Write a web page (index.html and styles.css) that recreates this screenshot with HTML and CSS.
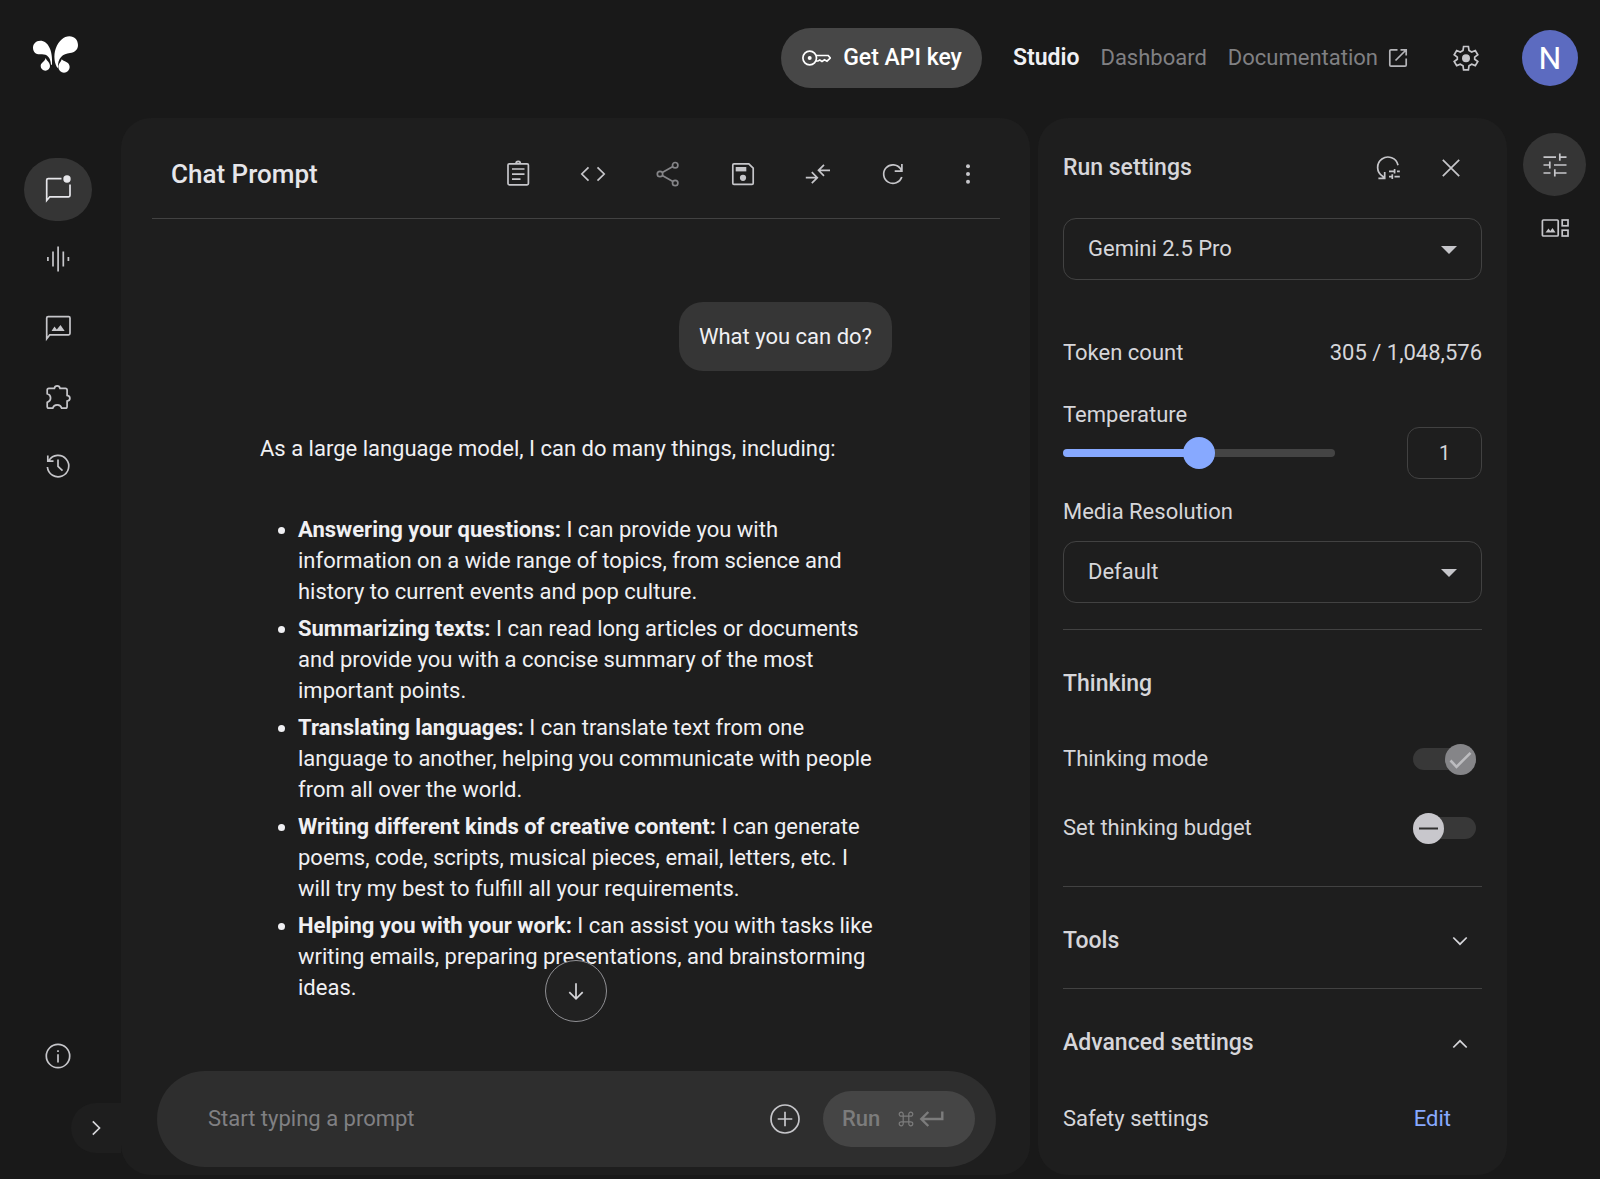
FILE: index.html
```html
<!DOCTYPE html>
<html lang="en">
<head>
<meta charset="utf-8">
<meta name="viewport" content="width=device-width, initial-scale=1">
<title>Chat Prompt</title>
<link rel="stylesheet" href="styles.css">
</head>
<body>
<div class="app">
  <header class="topbar">
    <a class="logo" href="#" aria-label="Home">
      <svg width="45" height="37" viewBox="100 107 135 111"><path d="M157 193C160 150 145 121 122 121C108 121 100 131 100 142C100 155 110 163 122 162C140 160 152 168 154 193ZM175 204C164 192 161 165 168 145C177 121 193 108 209 108C225 108 235 120 235 134C235 148 225 157 211 158C190 160 173 172 175 204ZM138 173C142 183 151 186 151 197A14 14 0 0 1 123 197C123 187 136 184 138 173ZM186 177C191 184 210 184 210 200A17 17 0 0 1 176 200C176 190 184 186 186 177Z" fill="#fff"/></svg>
    </a>
    <button class="api-key" type="button">
      <svg class="icon" viewBox="0 0 30 30"><circle cx="8.7" cy="15" r="6.8"/><circle class="solid" cx="8.7" cy="15" r="2"/><path d="M15 12.5H27.2L29.3 15L26 18.2L23.5 16.8L21 18.4L18.8 17L17 18H15"/></svg>
      Get API key
    </button>
    <nav class="links" aria-label="Main">
      <a class="link current" href="#">Studio</a>
      <a class="link" href="#">Dashboard</a>
      <a class="link" href="#">Documentation
        <svg class="icon small" viewBox="0 0 20 20"><path d="M9.5 1.8H3Q1.8 1.8 1.8 3V17Q1.8 18.2 3 18.2H17Q18.2 18.2 18.2 17V10.5M12.5 1.8H18.2V7.5M18 2L7.5 12.5"/></svg>
      </a>
    </nav>
    <button class="plain gear" type="button" aria-label="Settings">
      <svg class="icon" viewBox="0 0 30 30"><path d="M12.6 3.5H17.4L18 7.4L20.7 9L24.3 7.5L26.8 11.8L23.7 14.1V16.2L26.8 18.5L24.3 22.6L20.7 21.2L18 22.8L17.4 26.8H12.6L12 22.8L9.3 21.2L5.7 22.6L3.2 18.5L6.3 16.2V14.1L3.2 11.8L5.7 7.5L9.3 9L12 7.4Z"/><circle class="solid" cx="15" cy="15.2" r="4"/></svg>
    </button>
    <button class="avatar" type="button" aria-label="Account">N</button>
  </header>

  <nav class="rail" aria-label="Tools">
    <button class="rail-item active" type="button" aria-label="Chat">
      <svg class="icon" viewBox="0 0 30 30"><path d="M18.5 3.6H5.2Q3.7 3.6 3.7 5.1V25.5L6.8 21.8H25.6Q27 21.8 27 20.3V9.5"/><circle class="solid" cx="24" cy="4" r="3.7"/></svg>
    </button>
    <button class="rail-item" type="button" aria-label="Stream">
      <svg class="icon" viewBox="0 0 30 30"><path d="M4.9 13V17M10 7.5V22.5M15.1 2.5V27.5M20.3 7.5V22.5M25.4 13V17"/></svg>
    </button>
    <button class="rail-item" type="button" aria-label="Generate media">
      <svg class="icon" viewBox="0 0 30 30"><path d="M3.7 25.8V5.1Q3.7 3.6 5.2 3.6H25.6Q27 3.6 27 5.1V20.3Q27 21.8 25.6 21.8H6.8Z"/><path class="solid" d="M8.5 18L11.5 13.6L13.8 16.6L17.5 12L21.7 18Z"/></svg>
    </button>
    <button class="rail-item" type="button" aria-label="Build">
      <svg class="icon" viewBox="0 0 30 30"><path d="M4.2 8Q4.2 6.3 5.9 6.3H11.4Q11.8 3.8 14.2 3.8T17 6.3H22.4Q24.1 6.3 24.1 8V13.4Q26.9 13.8 26.9 16.2T24.1 19V24.4Q24.1 26.1 22.4 26.1H18.6Q17.8 22.9 14.2 22.9T9.8 26.1H5.9Q4.2 26.1 4.2 24.4V20.4Q7.6 19.4 7.6 16.1T4.2 11.8Z"/></svg>
    </button>
    <button class="rail-item" type="button" aria-label="History">
      <svg class="icon" viewBox="0 0 30 30"><path d="M4.4 16A10.7 10.7 0 1 0 6 9.4M4.8 4.5V10.2H10.5M15 8.5V15.3L19.5 19.6"/></svg>
    </button>
    <button class="rail-item info" type="button" aria-label="About">
      <svg class="icon" viewBox="0 0 30 30"><circle cx="15" cy="15" r="11.7"/><path d="M15 13.3V21.5M15 9.2V11"/></svg>
    </button>
    <button class="expand" type="button" aria-label="Expand navigation">
      <svg class="icon" viewBox="0 0 30 30"><path d="M11.8 8.3L18.5 15L11.8 21.7"/></svg>
    </button>
  </nav>

  <main class="panel chat">
    <header class="chat-head">
      <h1 class="chat-title">Chat Prompt</h1>
      <div class="toolbar">
        <button class="plain" type="button" aria-label="System instructions"><svg class="icon" viewBox="0 0 30 30"><rect x="5" y="4.8" width="20.4" height="21" rx="1.3"/><path d="M9 10H21.5M9 15.2H21.5M9 20.2H17.5M13 4.8Q13 2.3 15.2 2.3T17.4 4.8"/></svg></button>
        <button class="plain" type="button" aria-label="Get code"><svg class="icon" viewBox="0 0 30 30"><path d="M10.5 8.3L3.8 15L10.5 21.7M19.5 8.3L26.2 15L19.5 21.7"/></svg></button>
        <button class="plain dim" type="button" aria-label="Share"><svg class="icon" viewBox="0 0 30 30"><circle cx="7" cy="15" r="2.7"/><circle cx="22.2" cy="6.2" r="2.7"/><circle cx="22.2" cy="24" r="2.7"/><path d="M9.3 13.6L19.9 7.6M9.3 16.4L19.9 22.6"/></svg></button>
        <button class="plain" type="button" aria-label="Save"><svg class="icon" viewBox="0 0 30 30"><path d="M6 4.8H20.8L25.2 9.2V24.2Q25.2 25.4 24 25.4H6Q4.8 25.4 4.8 24.2V6Q4.8 4.8 6 4.8Z"/><path class="solid" d="M7.7 8H18.3V12.4H7.7Z"/><circle class="solid" cx="15" cy="18.8" r="3.1"/></svg></button>
        <button class="plain" type="button" aria-label="Compare"><svg class="icon" viewBox="0 0 30 30"><path d="M2.8 18.7H14M8.8 13.2L14.3 18.7L8.8 24.2M27 11.3H15.8M21 5.8L15.5 11.3L21 16.8"/></svg></button>
        <button class="plain" type="button" aria-label="Refresh"><svg class="icon" viewBox="0 0 30 30"><path d="M23.8 18A9.3 9.3 0 1 1 22.6 9.8L23.6 11.8M23.9 5V12.2H16.7"/></svg></button>
        <button class="plain" type="button" aria-label="More"><svg class="icon" viewBox="0 0 30 30"><circle class="solid" cx="15" cy="7.2" r="2"/><circle class="solid" cx="15" cy="15" r="2"/><circle class="solid" cx="15" cy="22.8" r="2"/></svg></button>
      </div>
    </header>

    <section class="thread">
      <p class="bubble">What you can do?</p>
      <p class="answer">As a large language model, I can do many things, including:</p>
      <ul class="abilities">
        <li><strong>Answering your questions:</strong> I can provide you with information on a wide range of topics, from science and history to current events and pop culture.</li>
        <li><strong>Summarizing texts:</strong> I can read long articles or documents and provide you with a concise summary of the most important points.</li>
        <li><strong>Translating languages:</strong> I can translate text from one language to another, helping you communicate with people from all over the world.</li>
        <li><strong>Writing different kinds of creative content:</strong> I can generate poems, code, scripts, musical pieces, email, letters, etc. I will try my best to fulfill all your requirements.</li>
        <li><strong>Helping you with your work:</strong> I can assist you with tasks like writing emails, preparing presentations, and brainstorming ideas.</li>
      </ul>
    </section>

    <div class="dock">
      <button class="to-bottom" type="button" aria-label="Scroll to bottom"><svg class="icon" viewBox="0 0 30 30"><path d="M15 7.2V22.5M8.3 16.2L15 22.8L21.7 16.2"/></svg></button>
      <form class="composer">
        <input class="prompt" type="text" placeholder="Start typing a prompt" aria-label="Prompt">
        <button class="plain add" type="button" aria-label="Add file"><svg class="icon large" viewBox="0 0 32 32"><circle cx="16" cy="16" r="14"/><path d="M16 8.7V23.3M8.7 16H23.3"/></svg></button>
        <button class="run" type="button">Run
          <span class="keys"><svg class="icon key" viewBox="0 0 16 16"><path d="M5.2 5.2H3.4A2 2 0 1 1 5.2 3.4V12.6A2 2 0 1 1 3.4 10.8H12.6A2 2 0 1 1 10.8 12.6V3.4A2 2 0 1 1 12.6 5.2H5.2"/></svg><svg class="icon enter" viewBox="0 0 26 18"><path d="M23.3 1.5V9H2.5M9.3 2L2.3 9L9.3 16"/></svg></span>
        </button>
      </form>
    </div>
  </main>

  <aside class="panel settings">
    <header class="row settings-head">
      <h2 class="heading">Run settings</h2>
      <div class="actions">
        <button class="plain" type="button" aria-label="Reset settings"><svg class="icon" viewBox="0 0 30 30"><path d="M25 12.2A10.3 10.3 0 1 0 9.6 23.2L11 24.6M5.4 25.4H11.7V19M16 18.3H21.5M21.6 16V20.6M24 18.3H26.8M16 23.6H18.8M19.3 21.3V26M21.5 23.6H26.8"/></svg></button>
        <button class="plain" type="button" aria-label="Close"><svg class="icon" viewBox="0 0 30 30"><path d="M6.8 6.8L23.2 23.2M23.2 6.8L6.8 23.2"/></svg></button>
      </div>
    </header>
    <div class="select-wrap">
      <select class="select" aria-label="Model"><option>Gemini 2.5 Pro</option></select>
      <svg class="caret" width="16" height="8" viewBox="0 0 16 8"><path d="M0 0H16L8 8Z"/></svg>
    </div>
    <div class="row tokens"><span>Token count</span><span>305 / 1,048,576</span></div>
    <label class="temp-label" for="temperature">Temperature</label>
    <div class="row">
      <input class="slider" id="temperature" type="range" min="0" max="2" step="0.1" value="1">
      <input class="number" type="text" value="1" aria-label="Temperature value">
    </div>
    <label class="media-label" for="media">Media Resolution</label>
    <div class="select-wrap">
      <select class="select" id="media"><option>Default</option></select>
      <svg class="caret" width="16" height="8" viewBox="0 0 16 8"><path d="M0 0H16L8 8Z"/></svg>
    </div>
    <section class="group thinking">
      <h2 class="heading">Thinking</h2>
      <div class="row option">
        <label for="mode">Thinking mode</label>
        <span class="toggle"><input class="switch" id="mode" type="checkbox" checked disabled><svg class="mark on" viewBox="0 0 31 31"><path d="M5.5 16.5L11.5 22.8L25.5 8.8"/></svg></span>
      </div>
      <div class="row option">
        <label for="budget">Set thinking budget</label>
        <span class="toggle"><input class="switch" id="budget" type="checkbox"><svg class="mark off" viewBox="0 0 31 31"><path d="M6 15.5H25"/></svg></span>
      </div>
    </section>
    <section class="group">
      <button class="row fold" type="button">Tools <svg class="icon chevron" viewBox="0 0 16 16"><path d="M1.3 4.5L8 11.2L14.7 4.5"/></svg></button>
    </section>
    <section class="group">
      <button class="row fold" type="button">Advanced settings <svg class="icon chevron" viewBox="0 0 16 16"><path d="M1.3 12.5L8 5.8L14.7 12.5"/></svg></button>
      <div class="row safety"><span>Safety settings</span><a class="edit" href="#">Edit</a></div>
    </section>
  </aside>

  <nav class="side" aria-label="Panels">
    <button class="side-item active" type="button" aria-label="Run settings"><svg class="icon" viewBox="0 0 30 30"><path d="M3.5 7.2H16M19.8 3.5V10.8M20 7.2H26.5M3.5 15H9.3M9.8 11.5V18.5M14 15H26.5M3.5 23H10.5M14.8 19.3V26.5M15 23H26.5"/></svg></button>
    <button class="side-item gallery" type="button" aria-label="Prompt gallery"><svg class="icon" viewBox="0 0 30 30"><rect x="2.4" y="7" width="15.8" height="16" rx="1"/><rect x="22.2" y="7" width="5.8" height="5.8"/><rect x="22.2" y="17.2" width="5.8" height="5.8"/><path class="solid" d="M5.5 19.5L8.5 15.5L10.3 18L12.5 15L15.5 19.5Z"/></svg></button>
  </nav>
</div>
</body>
</html>
```
FILE: styles.css
```css
* {
  box-sizing: border-box;
}

body {
  margin: 0;
  background: #191919;
  color: #d6d6da;
  font: 22px/24px Roboto, "Liberation Sans", sans-serif;
}

button,
input,
select {
  font: inherit;
  color: inherit;
}

button {
  padding: 0;
  border: 0;
  background: none;
  cursor: pointer;
}

h1,
h2,
p,
ul {
  margin: 0;
  padding: 0;
}

a {
  color: inherit;
  text-decoration: none;
}

.app {
  display: grid;
  grid-template-columns: 121px minmax(0, 1fr) 477px 93px;
  grid-template-rows: 118px 1fr;
  min-height: 100vh;
}

.icon {
  display: block;
  flex: none;
  width: 30px;
  height: 30px;
  fill: none;
  stroke: currentColor;
  stroke-width: 1.7;
}

.icon .solid {
  fill: currentColor;
  stroke: none;
}

.icon.small {
  width: 20px;
  height: 20px;
}

.icon.large {
  width: 32px;
  height: 32px;
}

.plain {
  display: grid;
  place-items: center;
  color: #c6c6ca;
}

.plain.dim {
  color: #858588;
}

/* Top bar */

.topbar {
  grid-column: 1 / -1;
  display: flex;
  align-items: center;
  padding: 0 22px 2px 33px;
}

.logo {
  margin: 0 auto 8px 0;
}

.logo svg {
  display: block;
}

.api-key {
  display: flex;
  align-items: center;
  gap: 12px;
  height: 60px;
  padding: 0 20px;
  border-radius: 30px;
  background: #474747;
  color: #fff;
  font-size: 23px;
  font-weight: 500;
}

.links {
  display: flex;
  gap: 21px;
  margin-left: 31px;
}

.link {
  display: flex;
  align-items: center;
  gap: 10px;
  color: #808083;
}

.link.current {
  color: #f0f0f4;
  font-size: 23px;
  font-weight: 600;
}

.link .icon {
  color: #b4b4b8;
}

.gear {
  margin: 0 41px 0 43px;
}

.avatar {
  width: 56px;
  height: 56px;
  border-radius: 50%;
  background: #5c6bc0;
  color: #fff;
  font-size: 32px;
}

/* Left rail */

.rail {
  display: flex;
  flex-direction: column;
  align-items: flex-start;
  gap: 6px;
  padding: 40px 0 26px 24px;
}

.rail-item {
  display: grid;
  place-items: center;
  width: 68px;
  height: 63px;
  border-radius: 32px;
  color: #c6c6ca;
}

.rail-item.active {
  background: #353535;
  color: #e6e6ea;
}

.rail-item.info {
  margin-top: auto;
}

.expand {
  display: grid;
  place-items: center;
  align-self: flex-end;
  width: 50px;
  height: 50px;
  margin-top: 10px;
  border-radius: 25px 0 0 25px;
  background: #1e1e1e;
}

/* Panels */

.panel {
  margin-bottom: 4px;
  border-radius: 30px;
  background: #1e1e1e;
}

.chat {
  display: flex;
  flex-direction: column;
}

.chat-head {
  display: flex;
  align-items: center;
  justify-content: space-between;
  height: 89px;
  margin: 12px 30px 0 31px;
  padding: 0 17px 0 19px;
  border-bottom: 1px solid #424242;
}

.chat-title {
  color: #e6e6ea;
  font-size: 26px;
  font-weight: 500;
}

.toolbar {
  display: flex;
  gap: 45px;
}

.thread {
  display: flex;
  flex-direction: column;
  padding: 83px 138px 48px 139px;
  color: #f0f0f3;
  line-height: 31px;
}

.bubble {
  align-self: flex-end;
  padding: 19px 20px;
  border-radius: 24px;
  background: #363636;
}

.answer {
  margin-top: 62px;
}

.abilities {
  display: flex;
  flex-direction: column;
  gap: 6px;
  margin-top: 50px;
  padding: 0 10px 0 38px;
}

.abilities strong {
  font-weight: 700;
}

.dock {
  position: relative;
  margin-top: auto;
  padding: 0 34px 8px 36px;
}

.to-bottom {
  position: absolute;
  bottom: calc(100% + 49px);
  left: calc(50% - 31px);
  display: grid;
  place-items: center;
  width: 62px;
  height: 62px;
  border: 1px solid #909094;
  border-radius: 50%;
  background: #212121;
  color: #d6d6da;
}

.composer {
  display: flex;
  align-items: center;
  height: 96px;
  padding: 0 21px 0 51px;
  border-radius: 48px;
  background: #2e2e2e;
}

.prompt {
  flex: 1;
  min-width: 0;
  padding: 0;
  border: 0;
  outline: 0;
  background: none;
}

.prompt::placeholder {
  color: #808083;
  opacity: 1;
}

.add {
  margin: 0 22px;
}

.run {
  display: flex;
  align-items: center;
  justify-content: space-between;
  width: 152px;
  height: 56px;
  padding: 0 30px 0 19px;
  border-radius: 28px;
  background: #454545;
  color: #7c7c7c;
  font-weight: 500;
}

.keys {
  display: flex;
  align-items: center;
  gap: 5px;
}

.icon.key {
  width: 16px;
  height: 16px;
  stroke-width: 1.2;
}

.icon.enter {
  width: 26px;
  height: 18px;
  stroke-width: 2.4;
}

/* Run settings */

.settings {
  display: flex;
  flex-direction: column;
  margin-left: 8px;
  padding: 24px 25px 8px;
}

.row {
  display: flex;
  align-items: center;
  justify-content: space-between;
}

.settings-head {
  height: 52px;
  margin-bottom: 24px;
  padding-right: 16px;
}

.actions {
  display: flex;
  gap: 33px;
}

.heading,
.fold {
  color: #d6d6da;
  font-size: 23px;
  font-weight: 500;
}

.select-wrap {
  position: relative;
}

.select {
  display: block;
  width: 100%;
  height: 62px;
  padding: 0 50px 0 24px;
  border: 1px solid #424242;
  border-radius: 13px;
  appearance: none;
  background: transparent;
}

.caret {
  position: absolute;
  top: 28px;
  right: 25px;
  fill: #c6c6ca;
  pointer-events: none;
}

.tokens {
  margin: 61px 0 38px;
}

.slider {
  width: 272px;
  height: 32px;
  margin: 0;
  appearance: none;
  background: none;
}

.slider::-webkit-slider-runnable-track {
  height: 8px;
  border-radius: 4px;
  background: linear-gradient(90deg, #87a9ff 50%, #444 50%);
}

.slider::-webkit-slider-thumb {
  width: 32px;
  height: 32px;
  margin-top: -12px;
  border-radius: 50%;
  appearance: none;
  background: #87a9ff;
}

.number {
  width: 75px;
  height: 52px;
  border: 1px solid #424242;
  border-radius: 12px;
  background: none;
  font-size: 20px;
  text-align: center;
}

.media-label {
  margin: 21px 0 17px;
}

.group {
  padding: 42px 0 35px;
  border-top: 1px solid #424242;
}

.thinking {
  margin-top: 26px;
  padding-bottom: 42px;
}

.option {
  height: 32px;
  margin-top: 37px;
  padding-right: 6px;
}

.heading + .option {
  margin-top: 47px;
}

.toggle {
  position: relative;
  display: block;
  width: 63px;
  height: 31px;
}

.switch {
  display: flex;
  align-items: center;
  width: 63px;
  height: 31px;
  margin: 0;
  appearance: none;
}

.switch::before {
  width: 100%;
  height: 22px;
  border-radius: 11px;
  background: #383838;
  content: "";
}

.mark {
  position: absolute;
  top: 0;
  left: 0;
  width: 31px;
  height: 31px;
  border-radius: 50%;
  background: #c8c7cc;
  fill: none;
  stroke: #303030;
  stroke-width: 2;
  pointer-events: none;
}

.mark.on {
  left: 32px;
  background: #858588;
  stroke: #bcbcbf;
  stroke-width: 2.6;
}

.fold {
  width: 100%;
  padding-right: 14px;
  text-align: left;
}

.icon.chevron {
  width: 16px;
  height: 16px;
}

.safety {
  margin-top: 52px;
  padding-right: 31px;
}

.edit {
  color: #87a9ff;
}

/* Right rail */

.side {
  display: flex;
  flex-direction: column;
  align-items: center;
  padding: 15px 0 0 2px;
}

.side-item {
  display: grid;
  place-items: center;
  width: 63px;
  height: 63px;
  border-radius: 50%;
  color: #c6c6ca;
}

.side-item.active {
  background: #353535;
}
```
